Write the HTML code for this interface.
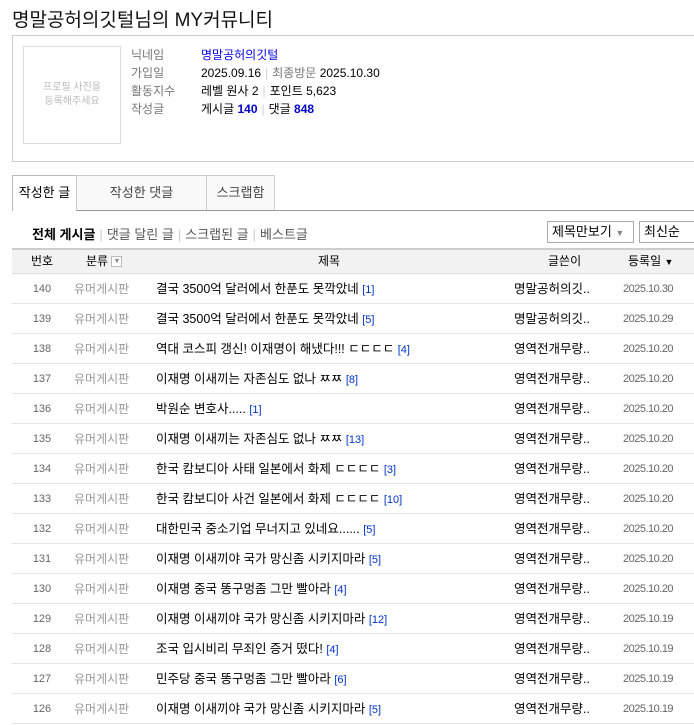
<!DOCTYPE html>
<html><head><meta charset="utf-8"><style>
*{margin:0;padding:0;box-sizing:border-box}
body{width:694px;height:721px;overflow:hidden;background:#fff;font-family:"Liberation Sans","Noto Sans CJK KR","NanumGothic",sans-serif;font-size:12px;color:#000;position:relative}
.a{position:absolute;white-space:nowrap}
.lab{color:#777}
.sep{color:#ccc;margin:0 4px}
.blue{color:#0000cc;font-weight:bold}
.row{position:absolute;left:12px;width:682px;height:30px;border-bottom:1px solid #e5e5e5}
.row span{position:absolute;top:0;line-height:30px;white-space:nowrap}
.n{left:20px;width:20px;text-align:center;color:#666;font-size:11px}
.c{left:62px;color:#999}
.t{left:144px;color:#000;font-size:12.5px}
.t b{font-weight:normal;color:#0033cc;font-size:11px}
.w{left:502px;font-size:12.5px}
.d{left:611px;color:#666;font-size:11px;letter-spacing:-0.5px}
.h{position:absolute;top:249px;line-height:24px}
</style></head><body>
<div class="a" style="left:12px;top:5px;font-size:19px;color:#111">명말공허의깃털님의 MY커뮤니티</div>
<div class="a" style="left:12px;top:35px;width:700px;height:127px;border:1px solid #ccc"></div>
<div class="a" style="left:23px;top:46px;width:98px;height:98px;border:1px solid #ddd;color:#bbb;font-size:10px;text-align:center;line-height:14px;padding-top:34px;white-space:normal">프로필 사진을<br>등록해주세요</div>
<div class="a lab" style="left:131px;top:46px">닉네임</div>
<div class="a" style="left:201px;top:46px;color:#0000ee">명말공허의깃털</div>
<div class="a lab" style="left:131px;top:64px">가입일</div>
<div class="a" style="left:201px;top:64px">2025.09.16<span class="sep">|</span><span class="lab">최종방문</span> 2025.10.30</div>
<div class="a lab" style="left:131px;top:82px">활동지수</div>
<div class="a" style="left:201px;top:82px">레벨 원사 2<span class="sep">|</span>포인트 5,623</div>
<div class="a lab" style="left:131px;top:100px">작성글</div>
<div class="a" style="left:201px;top:100px">게시글 <span class="blue">140</span><span class="sep">|</span>댓글 <span class="blue">848</span></div>
<div class="a" style="left:12px;top:210px;width:682px;border-top:1px solid #999"></div>
<div class="a" style="left:12px;top:175px;width:65px;height:36px;border:1px solid #bbb;border-bottom:none;background:#fff;text-align:center;line-height:34px;font-size:13px">작성한 글</div>
<div class="a" style="left:76px;top:175px;width:131px;height:35px;border:1px solid #ccc;border-bottom:none;background:#f9f9f9;text-align:center;line-height:34px;font-size:13px;color:#444">작성한 댓글</div>
<div class="a" style="left:206px;top:175px;width:69px;height:35px;border:1px solid #ccc;border-bottom:none;background:#f9f9f9;text-align:center;line-height:34px;font-size:13px;color:#444">스크랩함</div>
<div class="a" style="left:32px;top:224px;font-size:13px;color:#555"><b style="color:#000">전체 게시글</b><span class="sep">|</span>댓글 달린 글<span class="sep">|</span>스크랩된 글<span class="sep">|</span>베스트글</div>
<div class="a" style="left:547px;top:221px;width:87px;height:22px;border:1px solid #aaa;padding:0 4px;line-height:20px;font-size:13px">제목만보기 <span style="color:#888;font-size:9px">▼</span></div>
<div class="a" style="left:639px;top:221px;width:60px;height:22px;border:1px solid #aaa;padding:0 4px;line-height:20px;font-size:13px">최신순</div>
<div class="a" style="left:12px;top:248px;width:682px;height:26px;background:#f2f2f2;border-top:2px solid #ccc;border-bottom:1px solid #ddd"></div>
<div class="h" style="left:31px">번호</div>
<div class="h" style="left:86px">분류 <span style="display:inline-block;width:11px;height:11px;border:1px solid #bbb;background:#fff;font-size:7px;color:#888;line-height:9px;text-align:center;vertical-align:middle">▼</span></div>
<div class="h" style="left:318px">제목</div>
<div class="h" style="left:548px">글쓴이</div>
<div class="h" style="left:628px">등록일 <span style="font-size:9px">▼</span></div>
<div class="row" style="top:274px"><span class="n">140</span><span class="c">유머게시판</span><span class="t">결국 3500억 달러에서 한푼도 못깍았네 <b>[1]</b></span><span class="w">명말공허의깃..</span><span class="d">2025.10.30</span></div>
<div class="row" style="top:304px"><span class="n">139</span><span class="c">유머게시판</span><span class="t">결국 3500억 달러에서 한푼도 못깍았네 <b>[5]</b></span><span class="w">명말공허의깃..</span><span class="d">2025.10.29</span></div>
<div class="row" style="top:334px"><span class="n">138</span><span class="c">유머게시판</span><span class="t">역대 코스피 갱신! 이재명이 해냈다!!! ㄷㄷㄷㄷ <b>[4]</b></span><span class="w">영역전개무량..</span><span class="d">2025.10.20</span></div>
<div class="row" style="top:364px"><span class="n">137</span><span class="c">유머게시판</span><span class="t">이재명 이새끼는 자존심도 없나 ㅉㅉ <b>[8]</b></span><span class="w">영역전개무량..</span><span class="d">2025.10.20</span></div>
<div class="row" style="top:394px"><span class="n">136</span><span class="c">유머게시판</span><span class="t">박원순 변호사..... <b>[1]</b></span><span class="w">영역전개무량..</span><span class="d">2025.10.20</span></div>
<div class="row" style="top:424px"><span class="n">135</span><span class="c">유머게시판</span><span class="t">이재명 이새끼는 자존심도 없나 ㅉㅉ <b>[13]</b></span><span class="w">영역전개무량..</span><span class="d">2025.10.20</span></div>
<div class="row" style="top:454px"><span class="n">134</span><span class="c">유머게시판</span><span class="t">한국 캄보디아 사태 일본에서 화제 ㄷㄷㄷㄷ <b>[3]</b></span><span class="w">영역전개무량..</span><span class="d">2025.10.20</span></div>
<div class="row" style="top:484px"><span class="n">133</span><span class="c">유머게시판</span><span class="t">한국 캄보디아 사건 일본에서 화제 ㄷㄷㄷㄷ <b>[10]</b></span><span class="w">영역전개무량..</span><span class="d">2025.10.20</span></div>
<div class="row" style="top:514px"><span class="n">132</span><span class="c">유머게시판</span><span class="t">대한민국 중소기업 무너지고 있네요...... <b>[5]</b></span><span class="w">영역전개무량..</span><span class="d">2025.10.20</span></div>
<div class="row" style="top:544px"><span class="n">131</span><span class="c">유머게시판</span><span class="t">이재명 이새끼야 국가 망신좀 시키지마라 <b>[5]</b></span><span class="w">영역전개무량..</span><span class="d">2025.10.20</span></div>
<div class="row" style="top:574px"><span class="n">130</span><span class="c">유머게시판</span><span class="t">이재명 중국 똥구멍좀 그만 빨아라 <b>[4]</b></span><span class="w">영역전개무량..</span><span class="d">2025.10.20</span></div>
<div class="row" style="top:604px"><span class="n">129</span><span class="c">유머게시판</span><span class="t">이재명 이새끼야 국가 망신좀 시키지마라 <b>[12]</b></span><span class="w">영역전개무량..</span><span class="d">2025.10.19</span></div>
<div class="row" style="top:634px"><span class="n">128</span><span class="c">유머게시판</span><span class="t">조국 입시비리 무죄인 증거 떴다! <b>[4]</b></span><span class="w">영역전개무량..</span><span class="d">2025.10.19</span></div>
<div class="row" style="top:664px"><span class="n">127</span><span class="c">유머게시판</span><span class="t">민주당 중국 똥구멍좀 그만 빨아라 <b>[6]</b></span><span class="w">영역전개무량..</span><span class="d">2025.10.19</span></div>
<div class="row" style="top:694px"><span class="n">126</span><span class="c">유머게시판</span><span class="t">이재명 이새끼야 국가 망신좀 시키지마라 <b>[5]</b></span><span class="w">영역전개무량..</span><span class="d">2025.10.19</span></div>
</body></html>
